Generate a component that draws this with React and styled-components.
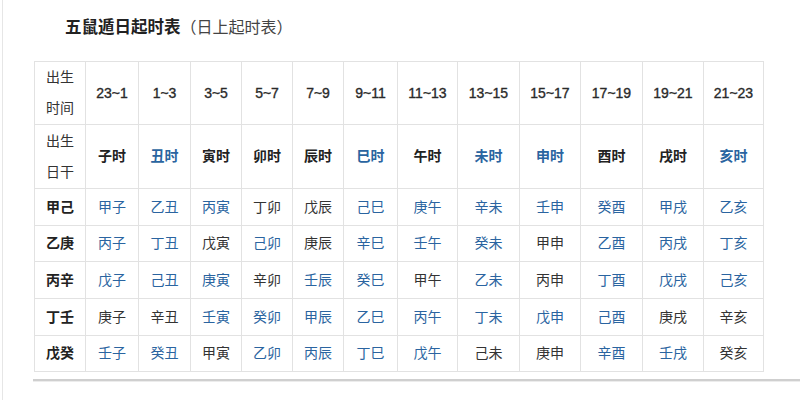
import React from "react";
import styled, { createGlobalStyle } from "styled-components";

const GlobalStyle = createGlobalStyle`
  html, body { margin: 0; padding: 0; background: #fff; }
  body { font-family: "Liberation Sans", "Noto Sans CJK SC", sans-serif; }
`;

const Page = styled.div`
  margin-left: 2px;
  border-left: 1px solid #e6e6e6;
  min-height: 400px;
  box-sizing: border-box;
`;

const Content = styled.div`
  padding-left: 31px;
`;

const Title = styled.h2`
  margin: 0;
  height: 61px;
  box-sizing: border-box;
  padding: 14px 0 0 31px;
  font-size: 16px;
  line-height: 24px;
  font-weight: normal;
  color: #444;
  font-family: "Noto Sans CJK SC", sans-serif;
`;

const TitleMain = styled.span`
  font-weight: bold;
  color: #222;
  font-size: 16.5px;
`;

const Grid = styled.div`
  display: grid;
  width: max-content;
  grid-template-columns: 51px 53px 52px 51px 51px 51px 54px 60px 62px 61px 62px 61px 60px;
  grid-template-rows: 63px 64px 37px 36px 37px 37px 36px;
  border-top: 1px solid #e2e2e2;
  border-left: 1px solid #e2e2e2;
`;

const Cell = styled.div`
  box-sizing: border-box;
  border-right: 1px solid #e2e2e2;
  border-bottom: 1px solid #e2e2e2;
  display: flex;
  align-items: center;
  justify-content: center;
  text-align: center;
  font-size: 14px;
  line-height: 31px;
  font-weight: ${(p) => (p.$bold ? "bold" : "normal")};
  color: ${(p) => (p.$blue ? "#2a64a0" : p.$bold ? "#222" : "#333")};
`;

const HourCell = styled(Cell)`
  color: #2a2a2a;
  -webkit-text-stroke: 0.35px #2a2a2a;
`;

const Rule = styled.div`
  margin: 7px 0 0 -1px;
  height: 2px;
  background: #cfcfcf;
  border-bottom: 1px solid #ececec;
`;

const hours = ["23~1", "1~3", "3~5", "5~7", "7~9", "9~11", "11~13", "13~15", "15~17", "17~19", "19~21", "21~23"];

const branches = [
  ["子时", 0], ["丑时", 1], ["寅时", 0], ["卯时", 0], ["辰时", 0], ["巳时", 1],
  ["午时", 0], ["未时", 1], ["申时", 1], ["酉时", 0], ["戌时", 0], ["亥时", 1],
];

const rows = [
  ["甲己", "甲子1 乙丑1 丙寅1 丁卯0 戊辰0 己巳1 庚午1 辛未1 壬申1 癸酉1 甲戌1 乙亥1"],
  ["乙庚", "丙子1 丁丑1 戊寅0 己卯1 庚辰0 辛巳1 壬午1 癸未1 甲申0 乙酉1 丙戌1 丁亥1"],
  ["丙辛", "戊子1 己丑1 庚寅1 辛卯0 壬辰1 癸巳1 甲午0 乙未1 丙申0 丁酉1 戊戌1 己亥1"],
  ["丁壬", "庚子0 辛丑0 壬寅1 癸卯1 甲辰1 乙巳1 丙午1 丁未1 戊申1 己酉1 庚戌0 辛亥0"],
  ["戊癸", "壬子1 癸丑1 甲寅0 乙卯1 丙辰1 丁巳1 戊午1 己未0 庚申0 辛酉1 壬戌1 癸亥0"],
];

export default function App() {
  return (
    <>
      <GlobalStyle />
      <Page>
        <Content>
          <Title>
            <TitleMain>五鼠遁日起时表</TitleMain>（日上起时表）
          </Title>
          <Grid>
            <Cell>出生<br />时间</Cell>
            {hours.map((h) => (
              <HourCell key={h}>{h}</HourCell>
            ))}
            <Cell>出生<br />日干</Cell>
            {branches.map(([b, blue]) => (
              <Cell key={b} $bold $blue={!!blue}>{b}</Cell>
            ))}
            {rows.map(([stem, list]) => (
              <React.Fragment key={stem}>
                <Cell $bold>{stem}</Cell>
                {list.split(" ").map((item) => (
                  <Cell key={item} $blue={item[2] === "1"}>{item.slice(0, 2)}</Cell>
                ))}
              </React.Fragment>
            ))}
          </Grid>
          <Rule />
        </Content>
      </Page>
    </>
  );
}
